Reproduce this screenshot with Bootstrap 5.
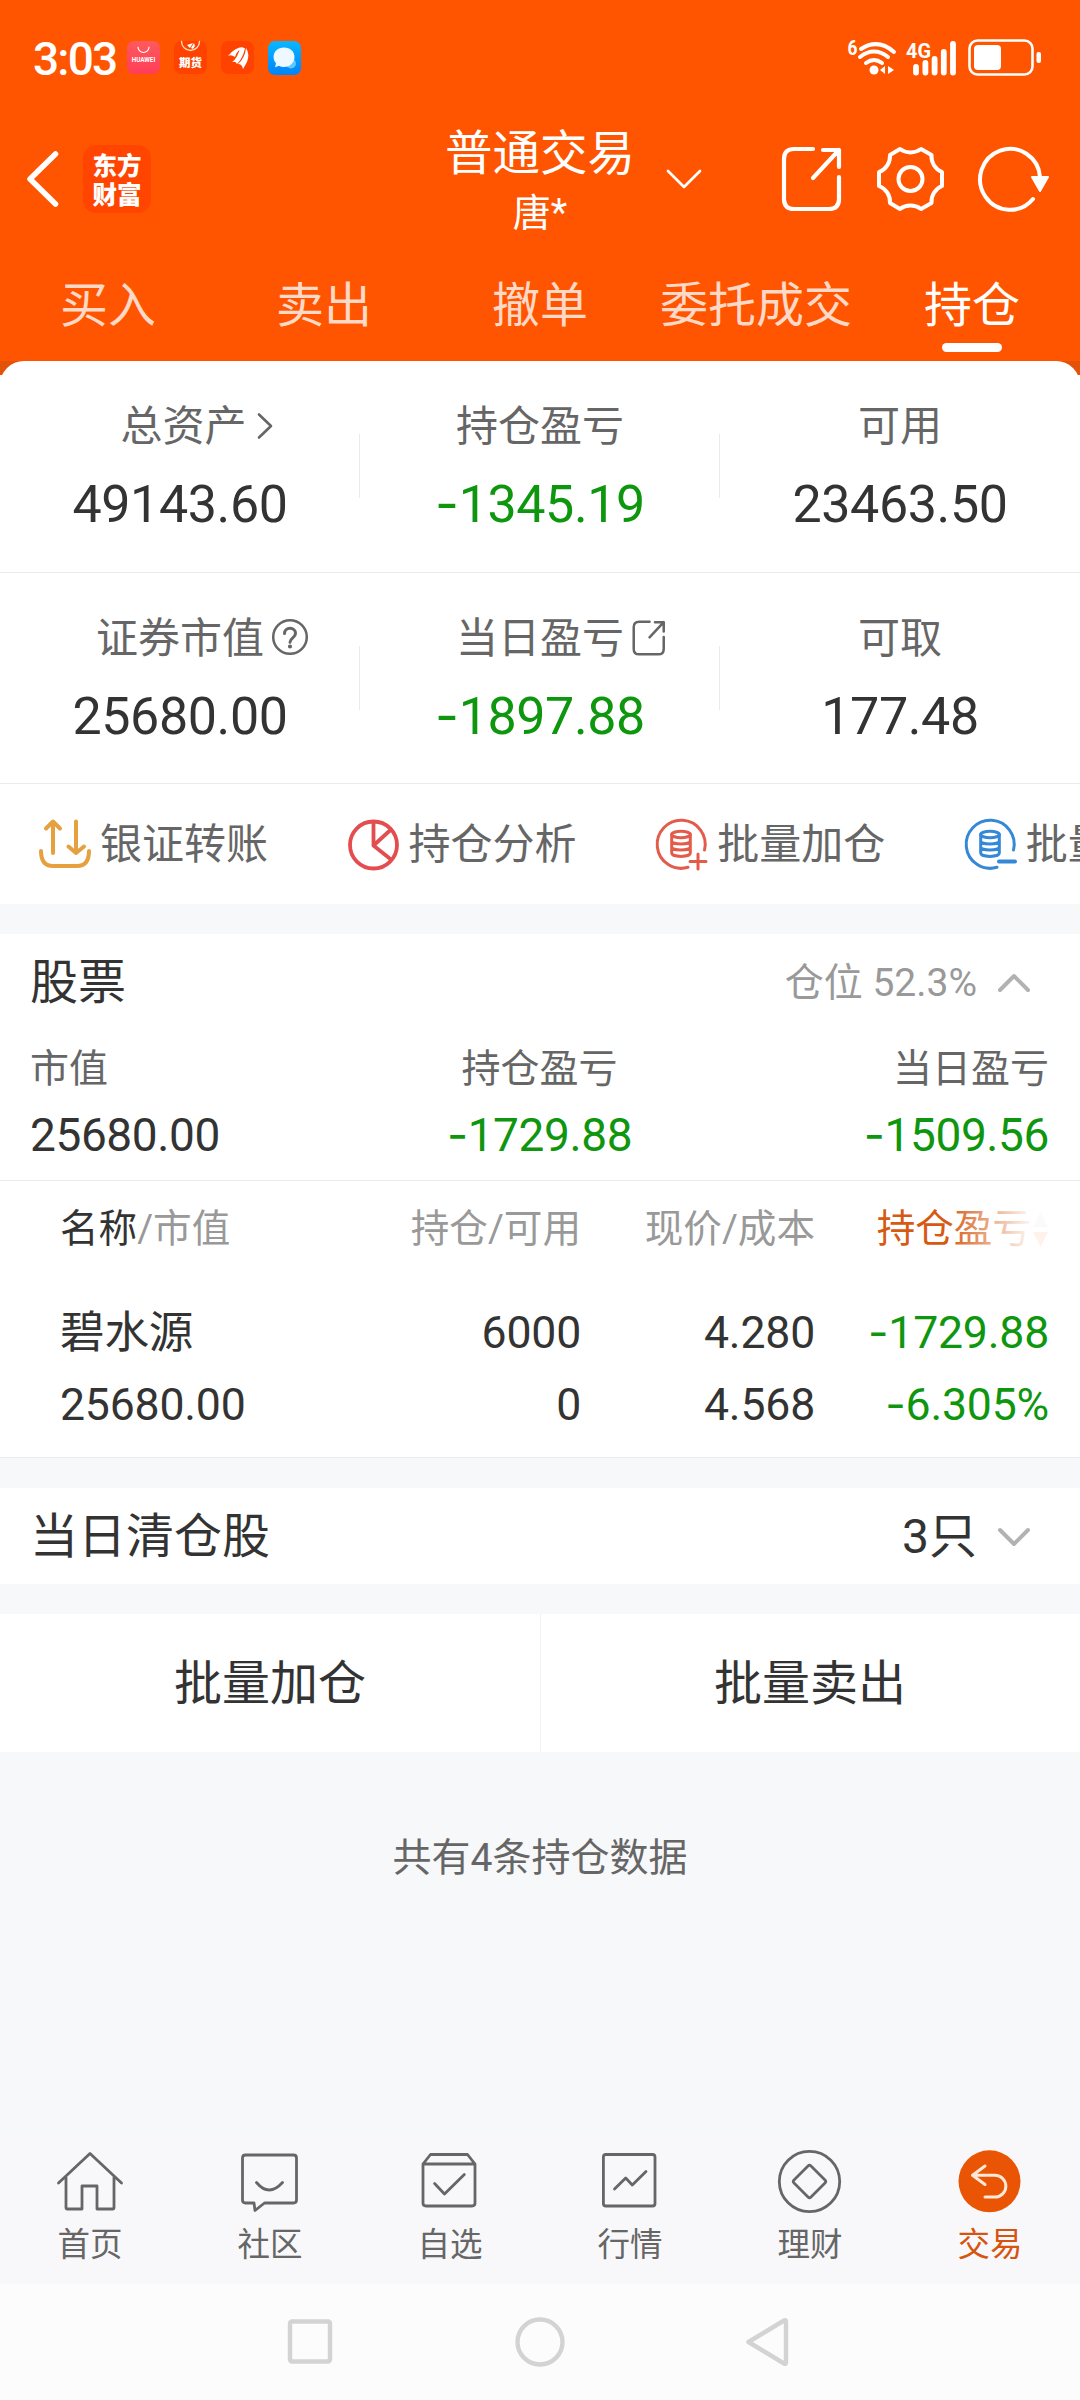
<!DOCTYPE html>
<html lang="zh-CN">
<head>
<meta charset="utf-8">
<meta name="viewport" content="width=device-width, initial-scale=1">
<title>普通交易 - 持仓</title>
<link href="https://cdn.jsdelivr.net/npm/bootstrap@5.3.0/dist/css/bootstrap.min.css" rel="stylesheet">
<style>
:root{--ink:#333;--sub:#666;--mute:#999;--fall:#0f960f;--brand:#ff5500;--paper:#f7f8fa;--rule:#ebebeb}
body{width:1080px;height:2400px;overflow:hidden;background:var(--paper);color:var(--ink);font-family:Roboto,"Noto Sans CJK SC",sans-serif;line-height:1;letter-spacing:0}
svg{display:block;flex:none;fill:none;stroke-linecap:round;stroke-linejoin:round;overflow:visible}
.topbar{background:var(--brand);height:361px;color:#fff}
.statusbar{height:116px;padding:0 37px 0 33px}
.clock{font-size:46px;line-height:50px;width:94px;letter-spacing:-1.8px;font-weight:500;padding-top:2px}
.titlebar{height:126px;padding:0 26px 0 26px}
.side{width:400px}
.brandmark{width:68px;height:68px;border-radius:13px;background:#ff4500;font:900 24.5px/29.5px "Noto Sans CJK SC",sans-serif;margin-left:25px}
.acct{font-size:47.5px;line-height:60px}
.holder{font-size:38px;line-height:58px}
.tabrow{height:119px}
.tabrow .nav-link{color:rgba(255,255,255,.78);font-size:48px;line-height:60px;padding:34px 0 0;text-align:center;white-space:nowrap}
.tabrow .nav-link.active{color:#fff}
.tabrow .active::after{content:"";display:block;width:60px;height:9px;border-radius:5px;background:#fff;margin:7px auto 0}
.corner{background:linear-gradient(#e25208 14px,#fff 14px)}
.sheet{background:#fff;border-radius:24px 24px 0 0}
.sumrow{height:212px;border-bottom:1px solid var(--rule)}
.sumrow+.sumrow{height:211px}
.sumcell{position:relative;padding-top:36px}
.sumcell+.sumcell::before{content:"";position:absolute;left:-1px;top:73px;height:64px;border-left:1px solid var(--rule)}
.lab{font-size:42px;line-height:60px;color:var(--sub)}
.amt{font-size:52px;line-height:60px;margin-top:18px;letter-spacing:-.4px}
.dn{color:var(--fall)}
.hy{font-family:Inter,sans-serif;line-height:0}
.quick{height:120px;padding:2px 0 0 39px;gap:79.6px;overflow:hidden}
.quick>div{gap:10px;font-size:42px;line-height:60px;color:var(--sub);white-space:nowrap}
.gapband{height:30px}
.stockhead{height:96px;padding:2px 49px 0 30px;font-size:48px}
.pos{font-size:39px;color:var(--mute);gap:20px}
.trio{height:150px;padding:9px 31px 0 30px}
.trio .lab{font-size:39px;line-height:60px}
.trio .amt{font-size:46px;line-height:60px;margin-top:6px}
.cols{display:grid;grid-template-columns:321px 200px 234px 234px;padding:0 31px 0 60px}
.thd{height:96px;border-top:1px solid var(--rule);font-size:38.6px;color:var(--mute);align-items:center;padding-top:2px}
.holding{height:182px;font-size:44.6px;letter-spacing:-.2px;padding-top:27px;line-height:60px;border-bottom:1px solid var(--rule);align-content:start;row-gap:12px}
.sortcol{position:relative;color:#d65a12;padding-left:13px;white-space:nowrap}
.sortcol::after{content:"";position:absolute;left:105px;right:-4px;top:-8px;bottom:-8px;background:linear-gradient(90deg,rgba(255,255,255,0) 20%,rgba(255,255,255,.9) 80%)}
.cleared{height:96px;padding:2px 49px 0 30px;font-size:48px}
.batch{height:138px}
.batch .btn{font-size:48px;line-height:60px;border:0;border-radius:0;color:var(--ink);background:#fff;font-family:inherit;padding:2px 0 0}
.batch .btn+.btn{box-shadow:inset 1px 0 #f2f2f2}
.total{font-size:39px;line-height:60px;color:var(--sub);padding-top:76px;height:382px}
.tabbar{height:150px;background:#f8f8fb;padding-top:12px}
.tabbar .nav-link{padding:0;color:var(--sub);font-size:32.5px;line-height:46px}
.tabbar .nav-link svg{margin-bottom:4px;stroke:#666;stroke-width:2.8}
.tabbar .nav-link.active{color:#d65410}
.sysbar{height:116px;background:#fcfcfc;gap:180px}
.sysbar svg{stroke:#d3d3d3;stroke-width:4.4}
</style>
</head>
<body>
<header class="topbar">
  <div class="statusbar d-flex align-items-center justify-content-between">
    <div class="d-flex align-items-center">
      <span class="clock">3:03</span>
      <svg width="176" height="36" viewBox="0 0 176 36">
        <defs>
          <linearGradient id="gm" x2="0" y2="1"><stop stop-color="#ff5a5c"/><stop offset="1" stop-color="#ff3d58"/></linearGradient>
          <linearGradient id="gb" x2="0" y2="1"><stop stop-color="#0ab7ff"/><stop offset="1" stop-color="#0084fa"/></linearGradient>
        </defs>
        <rect y="1" width="33" height="33" rx="7" fill="url(#gm)"/>
        <path d="M11 7a5.500 5.500 0 0 0 11 0" stroke="#fff" stroke-width="1.200"/>
        <text x="16.500" y="22" font-family="Roboto" font-weight="700" font-size="6.300" fill="#fff" text-anchor="middle">HUAWEI</text>
        <rect x="47" y="1" width="33" height="33" rx="7" fill="#ff4200"/>
        <path d="M54.500 1.500a9 9 0 0 0 18 0" stroke="#ffd9b8" stroke-width="1.400"/>
        <path d="M60 5l6-2-3 5zM64 8l3-5 1 3-2 3z" fill="#fff"/>
        <text x="63.500" y="27" font-family="Noto Sans CJK SC" font-weight="900" font-size="11.500" fill="#fff" text-anchor="middle">期货</text>
        <rect x="94" y="1" width="33" height="33" rx="7" fill="#ff4200"/>
        <path d="M101 16Q108 7 117 7Q110 10 108 17Q104 14 101 16zM105 22Q111 18 113 7.500L118 8Q116 18 110 24Q109 21 105 22zM119 8Q123 14 120 22L116 29Q115 24 111 24Q118 18 119 8z" fill="#fff"/>
        <rect x="141" y="1" width="33" height="34" rx="7" fill="url(#gb)"/>
        <circle cx="164" cy="23.500" r="5" fill="#5bc8ff"/>
        <path d="M157 7.500c6.200 0 10.500 4 10.500 9.500s-4.300 10-10.500 10c-2 0-3.500-.3-5-1.200l-4 1.400 1-4c-1.600-1.700-2.400-3.700-2.400-6.200 0-5.500 4.200-9.500 10.400-9.500z" fill="#eef9ff"/>
      </svg>
    </div>
    <svg width="196" height="40" viewBox="848 38 196 40">
      <g fill="#fff" font-family="Roboto" font-weight="700"><text x="848.500" y="55" font-size="20" textLength="10" lengthAdjust="spacingAndGlyphs">6</text><text x="907" y="58" font-size="21" textLength="25" lengthAdjust="spacingAndGlyphs">4G</text></g>
      <g stroke="#fff" stroke-width="4"><path d="M862 49q17-11 33 3M861 57q14-11 28 0M867 63q8-6 16 0"/></g>
      <circle cx="875" cy="70" r="4.500" fill="#fff"/><path d="M881 70l5-4v8zM889 66l6 4-6 4z" fill="#fff"/>
      <path d="M917 67v5.500M926.400 63v9.500M935.600 59v13.500M944.800 52v20.500M954 44v28.500" stroke="#fff" stroke-width="5.800"/>
      <rect x="970.500" y="40.500" width="63" height="34" rx="8" stroke="#fff" stroke-width="2.600"/>
      <rect x="975" y="45" width="27" height="25" rx="4" fill="#fff"/><rect x="1037.500" y="52" width="4.500" height="11" rx="2" fill="#fff"/>
    </svg>
  </div>
  <div class="titlebar d-flex align-items-center justify-content-between">
    <div class="side d-flex align-items-center">
      <svg width="32" height="56" viewBox="0 0 32 56"><path d="M29.500 3L4 28l25.500 25" stroke="#fff" stroke-width="5.500"/></svg>
      <div class="brandmark d-flex flex-column align-items-center justify-content-center"><span>东方</span><span>财富</span></div>
    </div>
    <div class="text-center pt-2"><div class="acct">普通交易</div><div class="holder">唐*</div></div>
    <div class="side d-flex align-items-center justify-content-between">
      <svg width="38" height="22" viewBox="0 0 38 22" style="margin-left:11px"><path d="M3 3l16 16L35 3" stroke="#fff" stroke-width="2.700"/></svg>
      <div class="d-flex align-items-center">
        <svg width="62" height="66" viewBox="0 0 62 66" stroke="#fff" stroke-width="4.200"><path d="M32 3H13Q3 3 3 13v40q0 10 10 10h35q10 0 10-10V31M42 4h16v17M58 4L32 32"/></svg>
        <svg width="69" height="68" viewBox="0 0 69 68" stroke="#fff" stroke-width="4" style="margin-left:33px"><path d="M14 10L24 4A18 18 0 0 0 45 4L55.500 10A17 17 0 0 0 66 27V41A17 17 0 0 0 55.500 58L45 64A18 18 0 0 0 24 64L14 58A17 17 0 0 0 3 41V27A17 17 0 0 0 14 10z"/><circle cx="34.500" cy="34" r="12"/></svg>
        <svg width="76" height="68" viewBox="0 0 76 68" stroke="#fff" stroke-width="4" style="margin-left:33px"><path d="M55 54A30 30.500 0 1 1 62 32"/><path d="M54 32h16l-8 14z" fill="#fff" stroke-width="2"/></svg>
      </div>
    </div>
  </div>
  <nav class="tabrow nav nav-fill flex-nowrap row g-0">
    <a class="nav-link col">买入</a><a class="nav-link col">卖出</a><a class="nav-link col">撤单</a><a class="nav-link col">委托成交</a><a class="nav-link col active">持仓</a>
  </nav>
</header>
<main>
  <div class="corner">
  <section class="sheet">
    <div class="sumrow row g-0 text-center">
      <div class="sumcell col">
        <div class="lab d-flex justify-content-center align-items-center" style="padding-left:7px">总资产<svg width="18" height="28" viewBox="0 0 18 28" style="margin:-2px -27px 0 9px"><path d="M3 2.500l12 11.500L3 25.500" stroke="#666" stroke-width="2.600"/></svg></div>
        <div class="amt">49143.60</div>
      </div>
      <div class="sumcell col"><div class="lab">持仓盈亏</div><div class="amt dn"><span class="hy">-</span>1345.19</div></div>
      <div class="sumcell col"><div class="lab">可用</div><div class="amt">23463.50</div></div>
    </div>
    <div class="sumrow row g-0 text-center">
      <div class="sumcell col">
        <div class="lab d-flex justify-content-center align-items-center">证券市值<svg width="38" height="38" viewBox="0 0 38 38" stroke="#666" style="margin:-2px -45px 0 7px"><circle cx="19" cy="18" r="16.800" stroke-width="2.500"/><path d="M13.500 14.500c0-7 11-7 11 0 0 4.500-5.500 4.200-5.500 8.800" stroke-width="3"/><circle cx="19" cy="27.500" r="1" stroke-width="2.200"/></svg></div>
        <div class="amt">25680.00</div>
      </div>
      <div class="sumcell col">
        <div class="lab d-flex justify-content-center align-items-center">当日盈亏<svg width="36" height="36" viewBox="0 0 62 66" stroke="#666" stroke-width="4.600" style="margin:-3px -43px 0 7px"><path d="M32 3H13Q3 3 3 13v40q0 10 10 10h35q10 0 10-10V31M42 4h16v17M58 4L32 32"/></svg></div>
        <div class="amt dn"><span class="hy">-</span>1897.88</div>
      </div>
      <div class="sumcell col"><div class="lab">可取</div><div class="amt">177.48</div></div>
    </div>
    <div class="quick d-flex align-items-center">
      <div class="d-flex align-items-center"><svg width="51" height="52" viewBox="0 0 51 52" stroke="#e5a03f" stroke-width="4"><path d="M2 32q0 15 12 15H38q12 0 12-15M14 34V3M7 9.500L14 2.500l7 7M37 2.500V34M29.500 27.500L37 34l8-6.500"/></svg>银证转账</div>
      <div class="d-flex align-items-center"><svg width="51" height="52" viewBox="0 0 51 52" stroke="#e44d4f" stroke-width="3.800"><circle cx="25.500" cy="26" r="23.500"/><path d="M25.500 3v23.500L43 10.500M25.500 26.500L43 40.500"/></svg>持仓分析</div>
      <div class="d-flex align-items-center"><svg width="51" height="52" viewBox="0 0 51 52" stroke="#e35c4b" stroke-width="3"><path d="M48.500 31A24 24 0 1 0 32 48.300"/><ellipse cx="25" cy="15.500" rx="9.300" ry="3.200"/><path d="M15.700 15.500V34c0 4.500 18.600 4.500 18.600 0V15.500M15.700 22c0 4 18.600 4 18.600 0M15.700 28c0 4 18.600 4 18.600 0M34 42.500H50M42 35v15"/></svg>批量加仓</div>
      <div class="d-flex align-items-center"><svg width="51" height="52" viewBox="0 0 51 52" stroke="#3588d6" stroke-width="3"><path d="M48.500 31A24 24 0 1 0 32 48.300"/><ellipse cx="25" cy="15.500" rx="9.300" ry="3.200"/><path d="M15.700 15.500V34c0 4.500 18.600 4.500 18.600 0V15.500M15.700 22c0 4 18.600 4 18.600 0M15.700 28c0 4 18.600 4 18.600 0"/><path d="M34 42.500H50" stroke-width="4"/></svg>批量卖出</div>
    </div>
  </section>
  </div>
  <div class="gapband"></div>
  <section class="bg-white">
    <div class="stockhead d-flex align-items-center justify-content-between"><span>股票</span>
      <div class="pos d-flex align-items-center"><span>仓位 52.3%</span><svg width="34" height="22" viewBox="0 0 34 22"><path d="M3 18L17 4l14 14" stroke="#b2b2b2" stroke-width="4"/></svg></div>
    </div>
    <div class="trio row g-0">
      <div class="col"><div class="lab">市值</div><div class="amt">25680.00</div></div>
      <div class="col text-center"><div class="lab">持仓盈亏</div><div class="amt dn"><span class="hy">-</span>1729.88</div></div>
      <div class="col text-end"><div class="lab">当日盈亏</div><div class="amt dn"><span class="hy">-</span>1509.56</div></div>
    </div>
    <div class="thd cols text-end">
      <span class="text-start"><span style="color:#333">名称</span>/市值</span><span>持仓/可用</span><span>现价/成本</span>
      <span class="sortcol d-flex align-items-center justify-content-end">持仓盈亏<svg width="17" height="36" viewBox="0 0 17 36" style="margin-left:1px"><path d="M8.500 0L16 15H1z" fill="#ccc"/><path d="M8.500 35L1 20h15z" fill="#ff7a45"/></svg></span>
    </div>
    <div class="holding cols text-end">
      <span class="text-start">碧水源</span><span>6000</span><span>4.280</span><span class="dn"><span class="hy">-</span>1729.88</span>
      <span class="text-start">25680.00</span><span>0</span><span>4.568</span><span class="dn"><span class="hy">-</span>6.305%</span>
    </div>
  </section>
  <div class="gapband"></div>
  <section class="cleared bg-white d-flex align-items-center justify-content-between"><span>当日清仓股</span>
    <div class="d-flex align-items-center"><span>3只</span><svg width="34" height="22" viewBox="0 0 34 22" style="margin-left:20px"><path d="M3 4l14 14L31 4" stroke="#b2b2b2" stroke-width="4"/></svg></div>
  </section>
  <div class="gapband"></div>
  <section class="batch row g-0"><button class="btn col">批量加仓</button><button class="btn col">批量卖出</button></section>
  <p class="total text-center mb-0">共有4条持仓数据</p>
</main>
<footer>
  <nav class="tabbar nav row g-0">
    <a class="nav-link col d-flex flex-column align-items-center"><svg width="72" height="72"><path d="M4.500 37L36 7.500 67.500 37M12 31.500V62q0 1 1 1H28V40H43V63H59q1 0 1-1V31.500"/></svg>首页</a>
    <a class="nav-link col d-flex flex-column align-items-center"><svg width="72" height="72"><path d="M11.500 9H59.500q3 0 3 3V54q0 3-3 3H30.500L21 64.500 20 57H11.500q-3 0-3-3V12q0-3 3-3zM22.500 36.500q12.500 15 26 0"/></svg>社区</a>
    <a class="nav-link col d-flex flex-column align-items-center"><svg width="72" height="72"><path d="M9 18L16.500 8.500H53.500L61 18V57q0 3-3 3H12q-3 0-3-3zH61M20.600 37.500L30.500 48 50.300 28.500"/></svg>自选</a>
    <a class="nav-link col d-flex flex-column align-items-center"><svg width="72" height="72"><rect x="9.400" y="8.500" width="51.600" height="51.500" rx="2.500"/><path d="M20.500 43L31.700 32l6.600 7L52 25.500"/></svg>行情</a>
    <a class="nav-link col d-flex flex-column align-items-center"><svg width="72" height="72"><circle cx="35.500" cy="35.500" r="30.200"/><path d="M34 20q1.500-1.500 3 0l14 14q1.500 1.500 0 3l-14 14q-1.500 1.500-3 0l-14-14q-1.500-1.500 0-3z"/></svg>理财</a>
    <a class="nav-link active col d-flex flex-column align-items-center"><svg width="72" height="72"><circle cx="35.500" cy="35.300" r="31" fill="#e95504" stroke="none"/><path d="M31 20L18.500 29.300 31 38.500M18.500 29.300H41a10.800 10.800 0 0 1 0 21.700H31" stroke="#ffe8d8" stroke-width="3"/></svg>交易</a>
  </nav>
  <div class="sysbar d-flex align-items-center justify-content-center">
    <svg width="50" height="50"><rect x="5" y="4.500" width="40" height="40" rx="2"/></svg>
    <svg width="50" height="50"><circle cx="25" cy="25" r="22.500"/></svg>
    <svg width="50" height="50"><path d="M3.500 25L39 3.500q2-1 2 1v41q0 2-2 1z"/></svg>
  </div>
</footer>
<script src="https://cdn.jsdelivr.net/npm/bootstrap@5.3.0/dist/js/bootstrap.bundle.min.js"></script>
</body>
</html>
